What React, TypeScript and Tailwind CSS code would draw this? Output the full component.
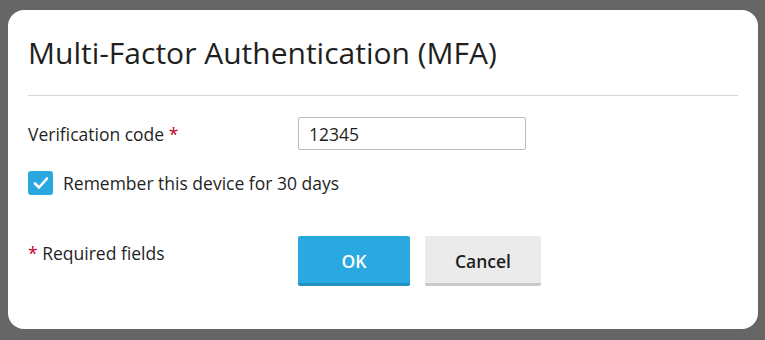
import React from "react";

export default function App() {
  return (
    <div
      className="w-[765px] h-[340px] bg-[#666666] pt-[10px] pl-[8px] overflow-hidden"
      style={{ fontFamily: '"Open Sans", "Liberation Sans", sans-serif' }}
    >
      <div className="w-[750px] h-[319px] bg-white rounded-[16px] px-[20px] pt-[23px] text-[#1f1f1f]">
        <h1 className="text-[30px] leading-[40px] font-normal">Multi-Factor Authentication (MFA)</h1>
        <div className="mt-[22px] h-px bg-[#d6d3e0]" />
        <div className="mt-[21px] flex items-center">
          <label className="w-[270px] text-[17.5px] leading-[24px]">
            Verification code <span className="text-[#c4002b]">*</span>
          </label>
          <input
            defaultValue="12345"
            className="w-[228px] h-[33px] border border-[#bdbdbd] rounded-[2px] px-[10px] text-[17.5px] text-[#1f1f1f] outline-none"
            style={{ fontFamily: '"Open Sans", "Liberation Sans", sans-serif' }}
          />
        </div>
        <div className="mt-[21px] flex items-center gap-[10px]">
          <div className="w-[25px] h-[24px] rounded-[3px] bg-[#29a8df] flex items-center justify-center">
            <svg width="16" height="14" viewBox="0 0 16 14" fill="none">
              <path d="M2 7.5 L6 11.5 L14 2.5" stroke="white" strokeWidth="2.6" strokeLinecap="round" strokeLinejoin="round" />
            </svg>
          </div>
          <span className="text-[17.5px] leading-[24px]">Remember this device for 30 days</span>
        </div>
        <div className="mt-[41px] flex items-start">
          <div className="w-[270px] pt-[5px] text-[17.5px] leading-[24px]">
            <span className="text-[#c4002b]">*</span> Required fields
          </div>
          <div className="flex gap-[15px]">
            <button className="w-[112px] h-[50px] bg-[#29a9df] border-b-[3px] border-[#2290c2] rounded-[2px] text-white text-[17.5px] font-semibold pt-[3px]">
              OK
            </button>
            <button className="w-[116px] h-[50px] bg-[#ebebeb] border-b-[3px] border-[#c9c9c9] rounded-[2px] text-[#1f1f1f] text-[17.5px] font-semibold pt-[3px]">
              Cancel
            </button>
          </div>
        </div>
      </div>
    </div>
  );
}
